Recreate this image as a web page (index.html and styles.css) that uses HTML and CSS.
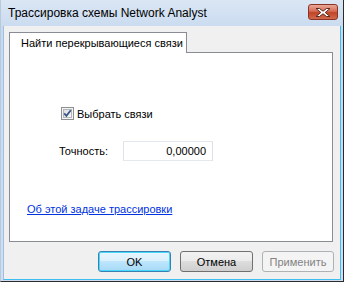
FILE: index.html
```html
<!DOCTYPE html>
<html lang="ru">
<head>
<meta charset="UTF-8">
<meta name="viewport" content="width=device-width, initial-scale=1.0">
<title>Трассировка схемы Network Analyst</title>
<link rel="stylesheet" href="styles.css">
</head>
<body>
<div class="window">
<div class="titlebar">
<span class="title">Трассировка схемы Network Analyst</span>
<div class="close">
<svg width="16" height="11" viewBox="0 0 16 11">
<path d="M1 1.5 L4.5 1.5 L8 4.2 L11.5 1.5 L15 1.5 L10.2 5.5 L15 9.5 L11.5 9.5 L8 6.8 L4.5 9.5 L1 9.5 L5.8 5.5 Z" fill="#fff" stroke="#5a2a22" stroke-width="1" stroke-linejoin="round"/>
</svg>
</div>
</div>
<div class="client">
<div class="tabs">
<div class="tab">Найти перекрывающиеся связи</div>
</div>
<div class="panel">
<label class="check">
<span class="box">
<svg width="13" height="13" viewBox="0 0 13 13">
<defs>
<linearGradient id="boxFill" x1="0" y1="0" x2="1" y2="1">
<stop offset="0" stop-color="#dcdcdc"/>
<stop offset="1" stop-color="#fbfbfb"/>
</linearGradient>
</defs>
<rect x="0.5" y="0.5" width="12" height="12" fill="#f4f4f4" stroke="#8e8f8f"/>
<rect x="2.5" y="2.5" width="8" height="8" fill="url(#boxFill)" stroke="#b3b6ba"/>
<path d="M3.2 6.4 L5.4 8.8 L9.8 3.3" fill="none" stroke="#3b5485" stroke-width="1.8"/>
</svg>
</span>
Выбрать связи
</label>
<div class="field">
<span class="field-label">Точность:</span>
<span class="input">0,00000</span>
</div>
<a class="link" href="#">Об этой задаче трассировки</a>
</div>
<div class="buttons">
<button class="btn btn-default">OK</button>
<button class="btn">Отмена</button>
<button class="btn" disabled>Применить</button>
</div>
</div>
</div>
</body>
</html>
```

FILE: styles.css
```css
body {
margin: 0;
background: #ffffff;
font-family: "Liberation Sans", Arial, sans-serif;
font-size: 11px;
color: #000;
}
.window {
width: 344px;
height: 282px;
box-sizing: border-box;
background: linear-gradient(#dbe6f4, #c6d9ef 12%, #cfdff1);
border-left: 1px solid #b9c9dc;
border-right: 1px solid #2b2b2b;
border-bottom: 1px solid #2b2b2b;
padding: 0 2px 1px 2px;
display: flex;
flex-direction: column;
}
.titlebar {
height: 26px;
display: flex;
align-items: flex-start;
justify-content: space-between;
}
.title {
margin: 5px 0 0 5px;
line-height: 16px;
font-size: 12px;
white-space: nowrap;
}
.close {
margin: 4px 3px 0 0;
width: 28px;
height: 14px;
border: 1px solid #8a3324;
border-radius: 3px;
background: linear-gradient(#e9a899 0%, #d56b55 45%, #c24426 55%, #cf6a4e 100%);
display: flex;
align-items: center;
justify-content: center;
}
.client {
flex: 1;
background: #f0f0f0;
border-left: 1px solid #9fc0e4;
border-right: 1px solid #3cbff0;
border-bottom: 1px solid #3cbff0;
padding: 6px 0 0 5px;
}
.tabs {
display: flex;
}
.tab {
position: relative;
z-index: 1;
width: 178px;
height: 21px;
line-height: 21px;
background: #fff;
border: 1px solid #898c95;
border-bottom: none;
margin-bottom: -1px;
padding-left: 11px;
box-sizing: border-box;
white-space: nowrap;
}
.panel {
width: 324px;
height: 190px;
box-sizing: border-box;
background: #fff;
border: 1px solid #898c95;
padding: 53px 0 0 17px;
}
.check {
display: flex;
align-items: center;
gap: 3px;
margin-left: 34px;
height: 15px;
}
.box {
display: flex;
}
.field {
display: flex;
align-items: center;
margin: 20px 0 0 32px;
}
.field-label {
width: 64px;
}
.input {
width: 90px;
height: 20px;
box-sizing: border-box;
border: 1px solid #abadb3;
border-top-color: #e3e9ef;
border-left-color: #e2e3ea;
border-right-color: #dbdfe6;
border-bottom-color: #e3e9ef;
text-align: right;
padding-right: 6px;
line-height: 18px;
}
.link {
display: inline-block;
margin-top: 42px;
color: #0033e0;
text-decoration: underline;
}
.buttons {
display: flex;
gap: 9px;
padding: 9px 0 0 89px;
}
.btn {
width: 73px;
height: 21px;
padding: 0;
font: inherit;
color: #000;
border: 1px solid #707070;
border-radius: 3px;
background: linear-gradient(#f2f2f2 0%, #ebebeb 49%, #dddddd 50%, #cfcfcf 100%);
}
.btn-default {
border-color: #3c7fb1;
box-shadow: inset 0 0 0 1px #48d8fb;
background: linear-gradient(#eaf6fd 0%, #d9f0fc 49%, #bee6fd 50%, #a7d9f5 100%);
}
.btn:disabled {
width: 72px;
border-color: #adb2b5;
background: #f4f4f4;
color: #838383;
}
```
